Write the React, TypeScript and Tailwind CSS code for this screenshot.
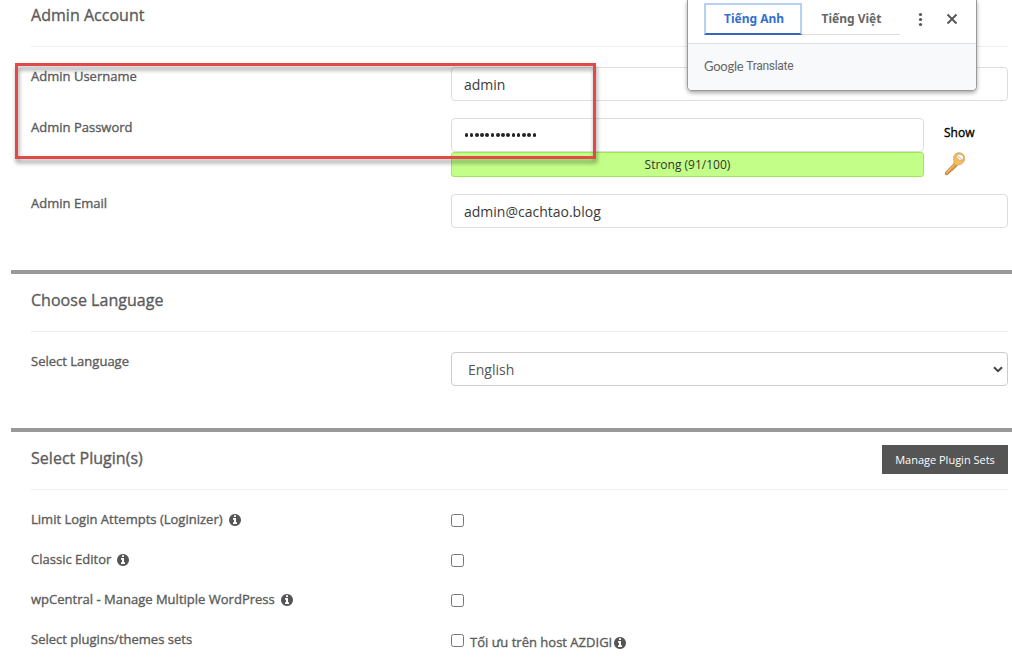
import React from "react";

const labelClass =
  "block text-[13px] leading-[18px] tracking-[0.01px] text-[#5c5c5c] [-webkit-text-stroke:0.35px_#5c5c5c]";
const inputClass =
  "block h-[34px] w-full rounded-[4px] border border-[#ddd] bg-white px-3 text-[14px] text-[#3a3a3a] outline-none";
const checkboxClass =
  "block size-[13px] shrink-0 appearance-none rounded-[2.5px] border border-[#767676] bg-white";

const plugins = [
  "Limit Login Attempts (Loginizer)",
  "Classic Editor",
  "wpCentral - Manage Multiple WordPress",
];

const InfoIcon = () => (
  <svg
    viewBox="0 128 1536 1536"
    fill="currentColor"
    className="mt-px size-3 shrink-0 text-[#555]"
  >
    <path d="M1024 1376v-160q0-14-9-23t-23-9h-96v-512q0-14-9-23t-23-9h-320q-14 0-23 9t-9 23v160q0 14 9 23t23 9h96v320h-96q-14 0-23 9t-9 23v160q0 14 9 23t23 9h448q14 0 23-9t9-23zm-128-896v-160q0-14-9-23t-23-9h-192q-14 0-23 9t-9 23v160q0 14 9 23t23 9h192q14 0 23-9t9-23zm640 416q0 209-103 385.5t-279.5 279.5-385.5 103-385.5-103-279.5-279.5-103-385.5 103-385.5 279.5-279.5 385.5-103 385.5 103 279.5 279.5 103 385.5z" />
  </svg>
);

const Heading = ({
  title,
  children,
}: {
  title: string;
  children?: React.ReactNode;
}) => (
  <div className="flex h-[58px] items-start justify-between border-b border-[#eee] pt-[13px]">
    <h2 className="text-[16px] leading-[26px] tracking-[0.03px] text-[#5c5c5c] [-webkit-text-stroke:0.35px_#5c5c5c]">
      {title}
    </h2>
    {children}
  </div>
);

const Row = ({
  label,
  children,
}: {
  label: React.ReactNode;
  children: React.ReactNode;
}) => (
  <div className="flex">
    <div className="w-[420px] shrink-0">{label}</div>
    <div className="w-[557px]">{children}</div>
  </div>
);

const KeyIcon = () => (
  <svg width="22" height="24" viewBox="0 0 22 24" fill="none">
    <path
      d="M10.6 11 1.4 20.2v2.4h2.4l1-1.7 1.3-.2.5-1.5 1.5-.4 5.2-5.4z"
      fill="#dd9a38"
      stroke="#b0763a"
      strokeWidth="0.8"
      strokeLinejoin="round"
    />
    <path d="M11.4 11.8 2.6 20.8" stroke="#fbd58b" strokeWidth="1" />
    <path
      fillRule="evenodd"
      d="M14.2.8c3.9-.4 6.6 2.1 6.5 5.7-.1 3.6-3 6.2-6.4 6.4l-1.4 1.2-3.5-3.4.7-1.3C8.500 5 10.500 1.200 14.200.8Zm1.700 1.400c-2-.3-3.900 1-3.700 2.300.3 1.700 3.200 4.200 5 4.100 1.500-.1 2.500-2 2.200-3.500-.3-1.600-2-2.700-3.500-2.900Z"
      fill="#f4bd5e"
      stroke="#c3924d"
      strokeWidth="0.6"
    />
    <path d="m12.800 3.500 5.600 4.600" stroke="#bd9a6c" strokeWidth="0.8" />
  </svg>
);

const TranslateBar = () => (
  <div className="absolute left-[687px] top-0 h-[91px] w-[290px] overflow-hidden rounded-b-[5px] border border-t-0 border-[#999] bg-white shadow-[0_2px_4px_rgba(0,0,0,0.35)]">
    <div className="flex h-[43px] pl-4 pt-[3px] font-['Noto_Sans'] text-[12px] font-bold">
      <div className="flex h-8 w-[98px] items-center justify-center border-2 border-[#b9d0f5] border-b-[#3367c0] pl-0.5 text-[#3470cc]">
        Tiếng Anh
      </div>
      <div className="flex h-8 w-[98px] items-center justify-center border-b border-[#ddd] pl-px text-[#666]">
        Tiếng Việt
      </div>
      <svg width="60" height="32" viewBox="0 0 60 32" className="ml-2">
        <g fill="#555">
          <circle cx="12.5" cy="11.5" r="1.6" />
          <circle cx="12.5" cy="16.5" r="1.6" />
          <circle cx="12.5" cy="21.5" r="1.6" />
        </g>
        <path
          d="m39.5 11.5 9 9m0-9-9 9"
          stroke="#555"
          strokeWidth="1.9"
        />
      </svg>
    </div>
    <div className="flex h-[48px] gap-[3px] border-t border-[#ddd] bg-[#f8f9fb] pl-4 pt-3 text-[12px] leading-[20px] text-[#666]">
      <span className="font-['Lato'] text-[13px] tracking-[-0.25px]">
        Google
      </span>
      <span className="font-['Roboto'] tracking-[-0.3px]">Translate</span>
    </div>
  </div>
);

const App = () => {
  return (
    <main className="relative h-[665px] w-[1012px] overflow-hidden bg-white pl-[11px] font-['Open_Sans',sans-serif]">
      <section className="-mt-[11px] h-[281px] pl-5 pr-1">
        <Heading title="Admin Account" />
        <div className="mt-5">
          <Row label={<label className={labelClass}>Admin Username</label>}>
            <input className={inputClass} defaultValue="admin" />
          </Row>
        </div>
        <div className="mt-[17px]">
          <Row label={<label className={labelClass}>Admin Password</label>}>
            <div className="flex">
              <div className="w-[473px]">
                <div className="flex h-[34px] items-center gap-[1.65px] rounded-[4px] border border-[#ddd] pl-[12.5px]">
                  {Array.from({ length: 14 }, (_, i) => (
                    <span
                      key={i}
                      className="h-[4px] w-[3.6px] rounded-full bg-[#222]"
                    />
                  ))}
                </div>
                <div className="h-[25px] rounded-[3px] border border-[#a0e850] bg-[#c3ff88] text-center text-[12px] leading-[23px] text-[#333]">
                  Strong (91/100)
                </div>
              </div>
              <div className="pl-5 pt-[6px]">
                <div className="text-[12px] leading-[18px] text-black [-webkit-text-stroke:0.35px_#000]">
                  Show
                </div>
                <div className="mt-[10px]">
                  <KeyIcon />
                </div>
              </div>
            </div>
          </Row>
        </div>
        <div className="mt-[17px]">
          <Row label={<label className={labelClass}>Admin Email</label>}>
            <input className={inputClass} defaultValue="admin@cachtao.blog" />
          </Row>
        </div>
      </section>

      <section className="h-[158px] border-t-4 border-[#999] pl-5 pr-1">
        <Heading title="Choose Language" />
        <div className="mt-5">
          <Row label={<label className={labelClass}>Select Language</label>}>
            <div className="flex h-[34px] items-center justify-between rounded-[4px] border border-[#ccc] pl-4 pr-1 text-[14px] text-[#555]">
              English
              <svg width="10" height="7" viewBox="0 0 10 7" fill="none">
                <path d="m1 1.2 4 4 4-4" stroke="#444" strokeWidth="2" />
              </svg>
            </div>
          </Row>
        </div>
      </section>

      <section className="border-t-4 border-[#999] pl-5 pr-1">
        <Heading title="Select Plugin(s)">
          <button className="h-[29px] w-[126px] bg-[#555] pt-0.5 text-[11px] text-white">
            Manage Plugin Sets
          </button>
        </Heading>
        <div className="mt-5 flex flex-col">
          {plugins.map((name) => (
            <div key={name} className="h-10">
              <Row
                label={
                  <div className="flex items-center gap-[6px]">
                    <label className={labelClass}>{name}</label>
                    <InfoIcon />
                  </div>
                }
              >
                <div className="pt-1">
                  <input type="checkbox" className={checkboxClass} />
                </div>
              </Row>
            </div>
          ))}
          <Row
            label={
              <label className={labelClass}>Select plugins/themes sets</label>
            }
          >
            <div className="flex items-start pt-1">
              <input type="checkbox" className={checkboxClass} />
              <div className="-mt-px ml-[6px] flex items-center gap-[2px]">
                <span className={labelClass}>Tối ưu trên host AZDIGI</span>
                <InfoIcon />
              </div>
            </div>
          </Row>
        </div>
      </section>

      <TranslateBar />
      <div className="absolute left-[15px] top-[63px] h-[96px] w-[581px] border-[3px] border-[#e24a4a] drop-shadow-[1px_4px_2px_rgba(0,0,0,0.4)]" />
    </main>
  );
};

export default App;
